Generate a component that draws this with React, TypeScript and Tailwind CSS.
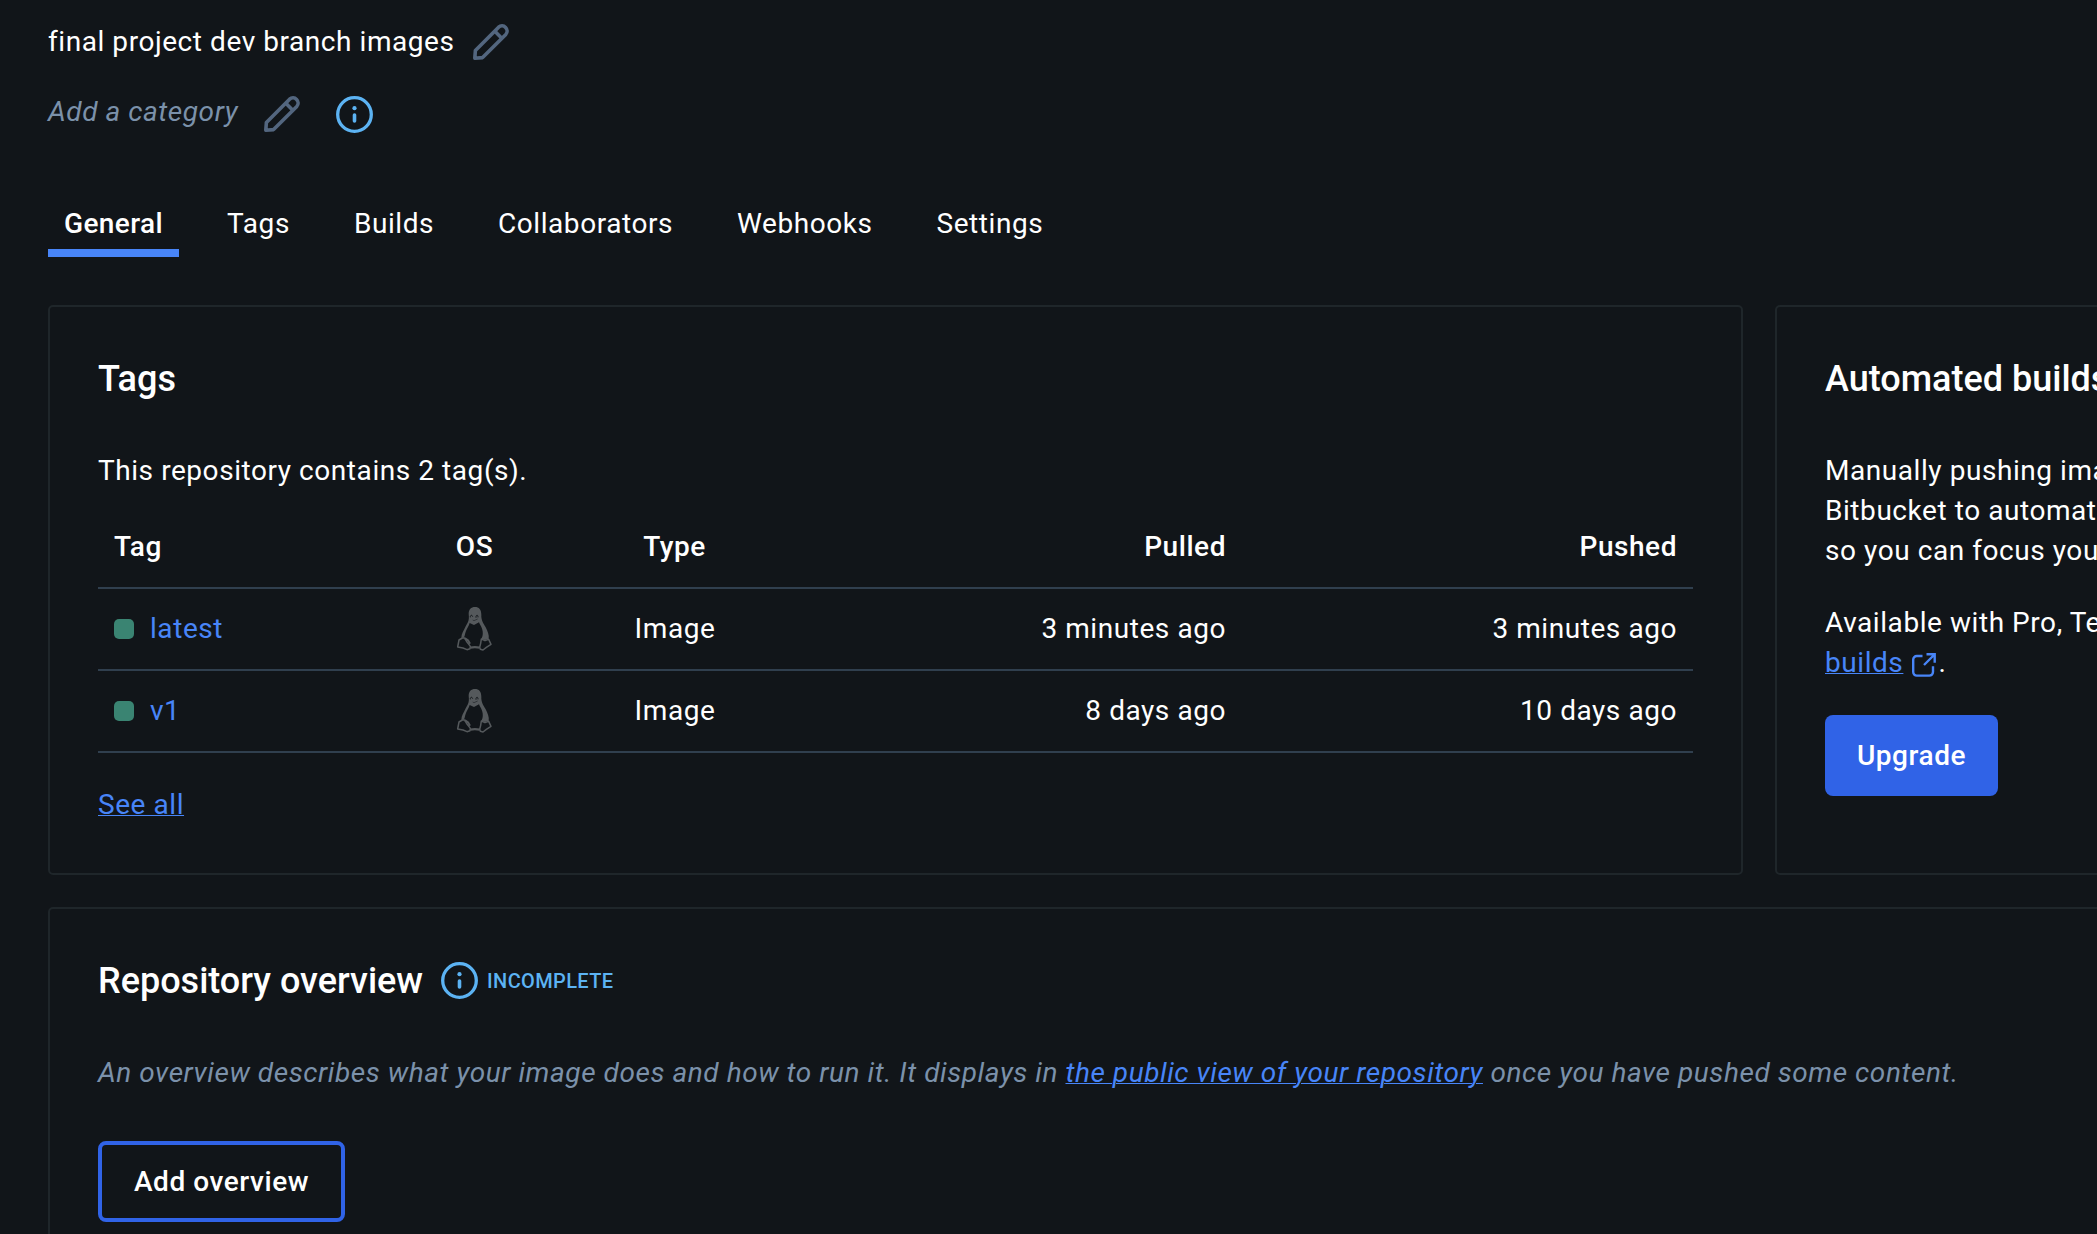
import React from "react";

function PencilIcon() {
  return (
    <svg viewBox="0 0 36 36" className="block h-9 w-9 shrink-0" fill="none" stroke="#53667f" strokeWidth="3.6" strokeLinejoin="round">
      <path d="M1.8 34.2 L2.4 26.4 L25.6 3.200 A5.100 5.100 0 0 1 32.8 10.4 L9.600 33.6 Z" />
      <path d="M21.6 7 L29 14.4" />
    </svg>
  );
}

function InfoIcon() {
  return (
    <svg viewBox="0 0 37 37" className="block h-[37px] w-[37px] shrink-0" fill="none" stroke="#5cb3f3" strokeLinecap="round">
      <circle cx="18.5" cy="18.5" r="16.8" strokeWidth="3.3" />
      <path d="M18.5 19 V25" strokeWidth="3.6" />
      <circle cx="18.5" cy="12.2" r="2.1" fill="#5cb3f3" stroke="none" />
    </svg>
  );
}

function ExternalIcon() {
  return (
    <svg viewBox="0 0 24 24" className="block h-6 w-6 shrink-0" fill="none" stroke="#4885f8" strokeWidth="2.4">
      <path d="M10.5 3 H4.8 A3.6 3.6 0 0 0 1.2 6.600 V19 A3.6 3.6 0 0 0 4.800 22.6 H17.400 A3.6 3.6 0 0 0 21 19 V13.200" />
      <path d="M14.500 1.300 H22.700 V9.800 M22.500 1.500 L12 12" />
    </svg>
  );
}

function TuxIcon() {
  return (
    <svg viewBox="47 48 111 138" className="block h-[46px] w-[37px]" fill="none" stroke="#55595c" strokeWidth="4.5" strokeLinejoin="round">
      <path
        d="M85 72 C85 58 92 51 104 51 C116 51 123 59 123 74 C122 90 129 99 136 112 C142 124 147 136 145 147 L134 150 L123 146 C129 138 129 122 122 109 C119 103 117 100 116 97 L101 105 L88 99 C86 108 80 114 77 123 C73 131 75 137 70 143 L63 143 C63 130 71 121 75 111 C80 101 88 94 85 72 Z"
        fill="#55595c"
        stroke="none"
      />
      <path d="M90 82 C89 76 95 73 97 80 M107 83 C106 75 113 72 113 82" stroke="#111519" strokeWidth="3" />
      <path d="M97 90 L101 92 L112 87" stroke="#111519" strokeWidth="1.500" />
      <path d="M66 144 L56 150 L52 171 L68 174 L80 179 L89 176 L90 169 L80 156 L73 144 Z" />
      <path d="M74 145 L83 151 L89 161" strokeWidth="6" />
      <path d="M123 147 L121 160 L118 172 L120 178 L128 180 L138 172 L152 163 L145 148 L134 152 Z" />
      <path d="M90 173 C98 171 109 171 118 173" strokeWidth="7" />
    </svg>
  );
}

const tabs = ["Tags", "Builds", "Collaborators", "Webhooks", "Settings"];

const rows = [
  { tag: "latest", pulled: "3 minutes ago", pushed: "3 minutes ago" },
  { tag: "v1", pulled: "8 days ago", pushed: "10 days ago" },
];

const card = "rounded-[5px] border-2 border-[#1f262a] px-12 pt-12";
const title = "text-[36px] leading-[48px] font-medium tracking-normal";
const link = "text-[#4885f8] underline decoration-1 underline-offset-1";
const grid = "grid h-[82px] grid-cols-[293px_167px_233px_451px_451px] items-start border-b-2 border-[#303f4e] pt-5";

export default function App() {
  return (
    <div className="h-[1234px] w-full overflow-hidden bg-[#111519] pl-12 font-[Roboto,sans-serif] text-[28px] leading-10 tracking-[0.56px] whitespace-nowrap text-white">
      <div className="flex h-[91px] items-start pt-[22px]">
        <span>final project dev branch images</span>
        <div className="mt-[2px] ml-[18px]"><PencilIcon /></div>
      </div>
      <div className="flex h-[112px] items-start pt-px">
        <span className="text-[#7b91aa] italic">Add a category</span>
        <div className="mt-[4px] ml-[26px]"><PencilIcon /></div>
        <div className="mt-[4px] ml-9"><InfoIcon /></div>
      </div>
      <nav className="flex h-[102px] items-start gap-8">
        <div className="h-[54px] border-b-8 border-[#4885f8] px-4 pt-px font-medium tracking-[0.4px]">General</div>
        {tabs.map((t) => (
          <div key={t} className="px-4 pt-px">{t}</div>
        ))}
      </nav>

      <div className="flex h-[570px] gap-8">
        <section className={`${card} w-[1695px] shrink-0`}>
          <h2 className={title}>Tags</h2>
          <p className="mt-12 mb-4">This repository contains 2 tag(s).</p>
          <div className={`${grid} font-medium`}>
            <div className="pl-4">Tag</div>
            <div className="text-center">OS</div>
            <div className="text-center">Type</div>
            <div className="pr-4 text-right">Pulled</div>
            <div className="pr-4 text-right">Pushed</div>
          </div>
          {rows.map((r) => (
            <div key={r.tag} className={grid}>
              <div className="flex items-center gap-4 pl-4">
                <span className="h-5 w-5 rounded-[5px] bg-[#3a8472]" />
                <span className="text-[#4885f8]">{r.tag}</span>
              </div>
              <div className="-mt-[3px] flex justify-center"><TuxIcon /></div>
              <div className="pl-px text-center">Image</div>
              <div className="pr-4 text-right">{r.pulled}</div>
              <div className="pr-4 text-right">{r.pushed}</div>
            </div>
          ))}
          <a className={`${link} mt-8 inline-block`}>See all</a>
        </section>

        <section className={`${card} w-[700px] shrink-0`}>
          <h2 className={title}>Automated builds</h2>
          <p className="mt-12">
            Manually pushing images
            <br />
            Bitbucket to automatically
            <br />
            so you can focus your
          </p>
          <p className="mt-8">Available with Pro, Team</p>
          <p className="flex">
            <a className={link}>builds</a>
            <span className="mt-2.5 ml-[9px]"><ExternalIcon /></span>
            <span className="ml-0.5">.</span>
          </p>
          <button className="mt-8 h-[81px] w-[173px] rounded-lg bg-[#3063e7] text-center font-medium">Upgrade</button>
        </section>
      </div>

      <section className={`${card} mt-8 h-[400px] w-[2427px]`}>
        <div className="flex items-start">
          <h2 className={title}>Repository overview</h2>
          <div className="mt-[5px] ml-[18px]"><InfoIcon /></div>
          <span className="mt-1 ml-[9px] text-[20px] font-medium tracking-[0.36px] text-[#5cb3f3]">INCOMPLETE</span>
        </div>
        <p className="mt-12 text-[#7b91aa] italic">
          An overview describes what your image does and how to run it. It displays in{" "}
          <a className={link}>the public view of your repository</a> once you have pushed some content.
        </p>
        <button className="mt-12 h-[81px] w-[247px] rounded-lg border-4 border-[#3063e7] text-center font-medium">Add overview</button>
      </section>
    </div>
  );
}
